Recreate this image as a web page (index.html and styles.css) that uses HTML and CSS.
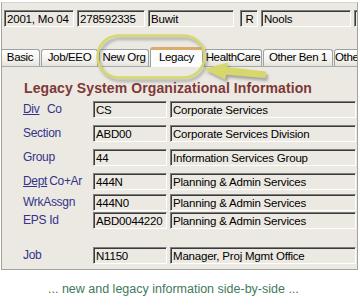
FILE: index.html
```html
<!DOCTYPE html>
<html>
<head>
<meta charset="utf-8">
<link rel="stylesheet" href="styles.css">
</head>
<body>
<div class="shot">
  <div class="window">
    <div class="topbar">
      <div class="field f-period">2001, Mo 04</div>
      <div class="field f-id">278592335</div>
      <div class="field f-last">Buwit</div>
      <div class="field f-code">R</div>
      <div class="field f-first">Nools</div>
      <div class="field f-more"></div>
    </div>
    <div class="tabs">
      <div class="tab">Basic</div>
      <div class="tab">Job/EEO</div>
      <div class="tab">New Org</div>
      <div class="tab active">Legacy</div>
      <div class="tab">HealthCare</div>
      <div class="tab">Other Ben 1</div>
      <div class="tab">Other Ben 2</div>
    </div>
    <div class="panel">
      <h1 class="title">Legacy System Organizational Information</h1>
      <div class="row first">
        <div class="label"><u class="key">Div</u><span>Co</span></div>
        <div class="field">CS</div>
        <div class="field">Corporate Services</div>
      </div>
      <div class="row">
        <div class="label">Section</div>
        <div class="field">ABD00</div>
        <div class="field">Corporate Services Division</div>
      </div>
      <div class="row">
        <div class="label">Group</div>
        <div class="field">44</div>
        <div class="field">Information Services Group</div>
      </div>
      <div class="row">
        <div class="label"><u class="key">Dept</u><span>Co+Ar</span></div>
        <div class="field">444N</div>
        <div class="field">Planning &amp; Admin Services</div>
      </div>
      <div class="row close">
        <div class="label">WrkAssgn</div>
        <div class="field">444N0</div>
        <div class="field">Planning &amp; Admin Services</div>
      </div>
      <div class="row tight">
        <div class="label">EPS Id</div>
        <div class="field">ABD0044220</div>
        <div class="field">Planning &amp; Admin Services</div>
      </div>
      <div class="row apart">
        <div class="label">Job</div>
        <div class="field">N1150</div>
        <div class="field">Manager, Proj Mgmt Office</div>
      </div>
    </div>
  </div>
  <p class="caption">... new and legacy information side-by-side ...</p>
  <svg class="callout" width="360" height="306" viewBox="0 0 360 306">
    <defs>
      <filter id="sh" x="-20%" y="-40%" width="140%" height="180%">
        <feGaussianBlur in="SourceAlpha" stdDeviation="1.6"/>
        <feOffset dx="2" dy="2.5" result="b"/>
        <feFlood flood-color="#6b6b6b" flood-opacity="0.55"/>
        <feComposite in2="b" operator="in"/>
        <feMerge><feMergeNode/><feMergeNode in="SourceGraphic"/></feMerge>
      </filter>
    </defs>
    <rect x="97.5" y="35.5" width="107" height="42" rx="21" fill="none" stroke="#d7d86c" stroke-width="2.5" filter="url(#sh)"/>
    <polygon points="204,69 228,62.5 227,67 266,71.5 265.5,78 226,74.5 225,79.5" fill="#d7d86c" filter="url(#sh)"/>
  </svg>
</div>
</body>
</html>
```
FILE: styles.css
```css
* { box-sizing: border-box; }
html, body { margin: 0; padding: 0; background: #fff; }
body {
  font-family: "Liberation Sans", Arial, sans-serif;
  font-size: 11.5px;
  letter-spacing: -0.2px;
  color: #000;
}
.shot {
  position: relative;
  width: 360px;
  height: 306px;
  overflow: hidden;
}
.window {
  margin: 2px 0 0 1px;
  width: 357px;
  height: 268px;
  background: #ebe9e2;
  border: 1px solid #a3a3a0;
  border-top-color: #d6d4cc;
  overflow: hidden;
}
.topbar {
  display: flex;
  gap: 3px;
  padding: 7px 0 0 2px;
  height: 24px;
  white-space: nowrap;
}
.field {
  height: 17px;
  line-height: 14px;
  padding: 1px 0 0 2px;
  background: #ebe9e2;
  border: 1px solid;
  border-color: #7f7f7f #ffffff #ffffff #7f7f7f;
  box-shadow: inset 1px 1px 0 #3a3a3a;
  overflow: hidden;
  white-space: nowrap;
  flex: none;
}
.f-period { width: 70px; }
.f-id { width: 68px; }
.f-last { width: 86px; }
.f-code { width: 18px; margin-left: 3px; text-align: center; padding-left: 1px; }
.f-first { width: 90px; }
.f-more { width: 40px; }

.tabs {
  display: grid;
  grid-template-columns: 40px 57px 50px 53px 58px 70px 40px;
  column-gap: 1px;
  align-items: end;
  margin: 20px 0 0 -2px;
  height: 19px;
}
.tab {
  height: 17px;
  line-height: 15px;
  font-size: 11.5px;
  letter-spacing: -0.35px;
  text-align: center;
  white-space: nowrap;
  overflow: hidden;
  border: 1px solid #9aa2a3;
  border-bottom: none;
  border-radius: 3px 3px 0 0;
  background: linear-gradient(#ffffff, #f0efea 70%, #e4e2da);
}
.tab.active {
  height: 20px;
  margin-bottom: -1px;
  position: relative;
  line-height: 14px;
  border-top: 3px solid #d9ad6c;
  background: #fcfcfc;
}
.panel {
  border-top: 1px solid #a6acad;
  margin-left: -1px;
  padding: 13px 0 0 21px;
}
.title {
  margin: 0 0 5px 2px;
  font-size: 14px;
  line-height: 16px;
  font-weight: bold;
  color: #7e3838;
  letter-spacing: 0.1px;
}
.row {
  display: grid;
  grid-template-columns: 68px 74px 186px;
  column-gap: 3px;
  margin-top: 7px;
  height: 17px;
}
.row.first { margin-top: 0; }
.row.close { margin-top: 4px; }
.row.tight { margin-top: 1px; }
.row.apart { margin-top: 18px; }
.label {
  color: #33338a;
  font-size: 12px;
  line-height: 17px;
  letter-spacing: -0.3px;
  white-space: nowrap;
  padding-left: 1px;
}
.label .key {
  display: inline-block;
  min-width: 22px;
  margin-right: 2px;
  text-decoration: underline;
}
.caption {
  margin: 12px 0 0 48px;
  font-size: 12.5px;
  line-height: 15px;
  letter-spacing: 0;
  color: #3f7a5c;
}
.callout {
  position: absolute;
  left: 0;
  top: 0;
  pointer-events: none;
}
```
